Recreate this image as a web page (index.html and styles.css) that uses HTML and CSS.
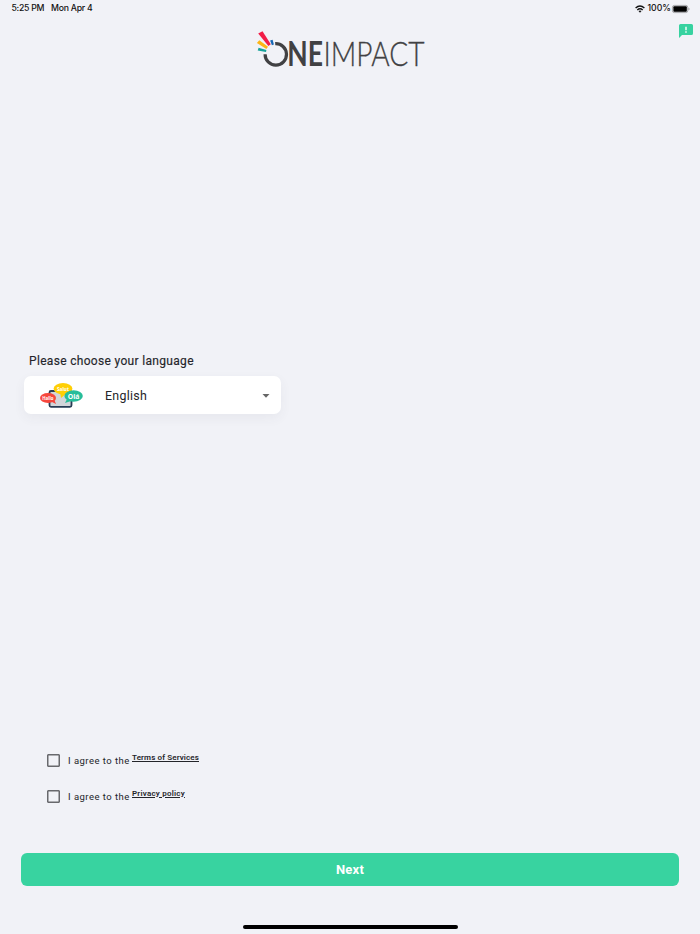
FILE: index.html
```html
<!DOCTYPE html>
<html lang="en">
<head>
<meta charset="utf-8">
<title>OneImpact</title>
<link rel="stylesheet" href="styles.css">
</head>
<body>
<header class="status">
  <span class="time">5:25 PM</span>
  <span class="date">Mon Apr 4</span>
  <svg class="wifi" width="10" height="8" viewBox="0 0 10 8"><g fill="none" stroke="#111" stroke-width="1.4"><path d="M.6 3Q5-1 9.4 3"/><path d="M2.3 4.9Q5 2.5 7.7 4.9"/></g><path d="M3.5 6.1Q5 5 6.5 6.1L5 7.7z" fill="#111"/></svg>
  <span class="percent">100%</span>
  <svg class="battery" width="18" height="8" viewBox="0 0 18 8"><rect x=".4" y=".4" width="15.4" height="7.2" rx="2" fill="#d8d9dc" stroke="#96979b" stroke-width=".8"/><rect x="1.4" y="1.3" width="13.4" height="5.4" rx="1" fill="#000"/><path d="M16.5 2.7q1.1.4 1.1 1.3t-1.1 1.3z" fill="#96979b"/></svg>
</header>
<div class="brand">
  <svg class="logo" width="174" height="56" viewBox="255 25 174 56" role="img" aria-label="OneImpact">
    <path d="M258.2 33.6L262.5 31.2L270.8 44.2L268.4 46z" fill="#f21d47"/>
    <path d="M256.9 43L259.3 40.2L268 46.8L266.4 48.9z" fill="#fdb515"/>
    <path d="M257.7 50.4L258.6 47.8L266.4 49.9L266 52z" fill="#16a39b"/>
    <path d="M270.1 40.5L272.6 39.8L273.9 44.5L271.9 45.2z" fill="#1767b5"/>
    <path d="M275.2 43.7A10.7 10.7 0 1 1 265.1 54.2" fill="none" stroke="#414143" stroke-width="3.2"/>
    <text class="wordmark-bold" x="287.3" y="65.9" textLength="35.7" lengthAdjust="spacingAndGlyphs">NE</text>
    <text class="wordmark-light" x="323.5" y="65.9" textLength="101" lengthAdjust="spacingAndGlyphs">IMPACT</text>
  </svg>
  <svg class="feedback" width="14" height="14" viewBox="0 0 14 14"><path d="M1.5 0h11A1.5 1.5 0 0 1 14 1.5v8a1.5 1.5 0 0 1-1.5 1.5H3L0 14V1.5A1.5 1.5 0 0 1 1.5 0z" fill="#37d2a0"/><path d="M7 2.7v3.5M7 7.3v1.4" stroke="#fff" stroke-width="1.4"/></svg>
</div>
<main>
  <h1 class="prompt"><span>Please choose your language</span></h1>
  <div class="select">
    <svg class="hello" width="44" height="26" viewBox="0 0 44 26">
      <rect x="9.5" y="9" width="22" height="15.8" rx="1.5" fill="#d2d5da" stroke="#283c55" stroke-width="1.8"/>
      <path d="M20 10l1 6 6-5z" fill="#ffcf05"/>
      <path d="M27 17l-2 4 6-2z" fill="#27bd9a"/>
      <path d="M10 19l6 3-2-5z" fill="#f6473d"/>
      <ellipse cx="8" cy="16" rx="8" ry="5" fill="#f6473d"/>
      <ellipse cx="23" cy="6.8" rx="9.4" ry="5.7" fill="#ffcf05"/>
      <ellipse cx="33.6" cy="14" rx="9.2" ry="5.8" fill="#27bd9a"/>
      <text x="2.2" y="17.7" font-size="4.9" textLength="11.4" lengthAdjust="spacingAndGlyphs">Hallo</text>
      <text x="17" y="8.5" font-size="5" textLength="12" lengthAdjust="spacingAndGlyphs">Salut</text>
      <text x="27.7" y="16.5" font-size="7.2" textLength="11.8" lengthAdjust="spacingAndGlyphs">Olá</text>
    </svg>
    <span class="value">English</span>
    <svg class="arrow" width="8" height="4" viewBox="0 0 8 4"><path d="M.5 0h7L4 3.7z" fill="#666"/></svg>
  </div>
  <div class="agreements">
    <label class="agree"><span class="box"></span><span class="text">I agree to the</span><a class="terms">Terms of Services</a></label>
    <label class="agree"><span class="box"></span><span class="text">I agree to the</span><a class="privacy">Privacy policy</a></label>
  </div>
  <button class="next">Next</button>
</main>
<div class="home-bar"></div>
</body>
</html>
```
FILE: styles.css
```css
* { box-sizing: border-box; }
body {
  margin: 0;
  width: 700px;
  height: 934px;
  overflow: hidden;
  background: #f1f2f7;
  color: #24252a;
  font-family: Roboto, "Liberation Sans", sans-serif;
}
svg { display: block; flex: none; overflow: visible; }
.status {
  display: flex;
  align-items: center;
  height: 17px;
  padding: 0 10.5px 0 11.5px;
  font: 500 8.7px/17px Inter, sans-serif;
  color: #111;
  white-space: nowrap;
}
.time { width: 39.5px; letter-spacing: -.25px; }
.date { letter-spacing: -.25px; }
.wifi { margin-left: auto; margin-right: 2.5px; }
.percent { width: 24px; }
.brand {
  display: flex;
  align-items: flex-start;
  height: 335.5px;
  padding: 8px 7px 0 255px;
}
.feedback { margin: -1px 0 0 auto; }
.wordmark-bold { font: 700 33.6px Lato, sans-serif; fill: #414143; }
.wordmark-light { font: 300 33.6px Lato, sans-serif; fill: #414143; stroke: #414143; stroke-width: .3px; }
.prompt {
  margin: 0 0 0 29px;
  height: 23.5px;
  font-size: 12px;
  line-height: 17px;
  font-weight: 400;
  letter-spacing: .32px;
  -webkit-text-stroke: .15px #24252a;
}
.select {
  display: flex;
  align-items: center;
  width: 257px;
  height: 38px;
  margin-left: 24px;
  padding: 0 11px 0 15.5px;
  border-radius: 7px;
  background: #fff;
  box-shadow: 0 4px 12px rgba(60, 65, 90, .06);
}
.hello text { font-family: "Open Sans", sans-serif; font-weight: 700; fill: #fff; }
.value { margin-left: 21.5px; font-size: 12.4px; line-height: 20px; letter-spacing: .3px; padding-top: 2px; }
.arrow { margin-left: auto; margin-top: 1px; }
.agreements {
  display: grid;
  gap: 22px;
  height: 99px;
  align-content: start;
  margin: 340px 0 0 47px;
}
.agree { display: flex; align-items: center; height: 14px; }
.box { width: 13px; height: 13px; border: 1.5px solid #68696d; border-radius: 1px; margin: -1px 8px 0 0; box-shadow: inset 0 0 0 .5px #68696d; }
.text { width: 64px; font-size: 9.5px; line-height: 14px; letter-spacing: .47px; white-space: nowrap; }
.agree a { font-size: 8px; line-height: 10px; font-weight: 600; text-decoration: underline; margin-top: -7px; white-space: nowrap; }
.terms { letter-spacing: .12px; }
.privacy { letter-spacing: .22px; }
.next {
  display: block;
  width: 658px;
  height: 33px;
  margin: 0 0 0 21px;
  border: 0;
  border-radius: 6px;
  background: #38d3a0;
  color: #fff;
  font: 700 13px Roboto, sans-serif;
  letter-spacing: .2px;
}
.home-bar { width: 215px; height: 4px; margin: 38.5px 0 0 242.5px; border-radius: 2px; background: #000; }
```
